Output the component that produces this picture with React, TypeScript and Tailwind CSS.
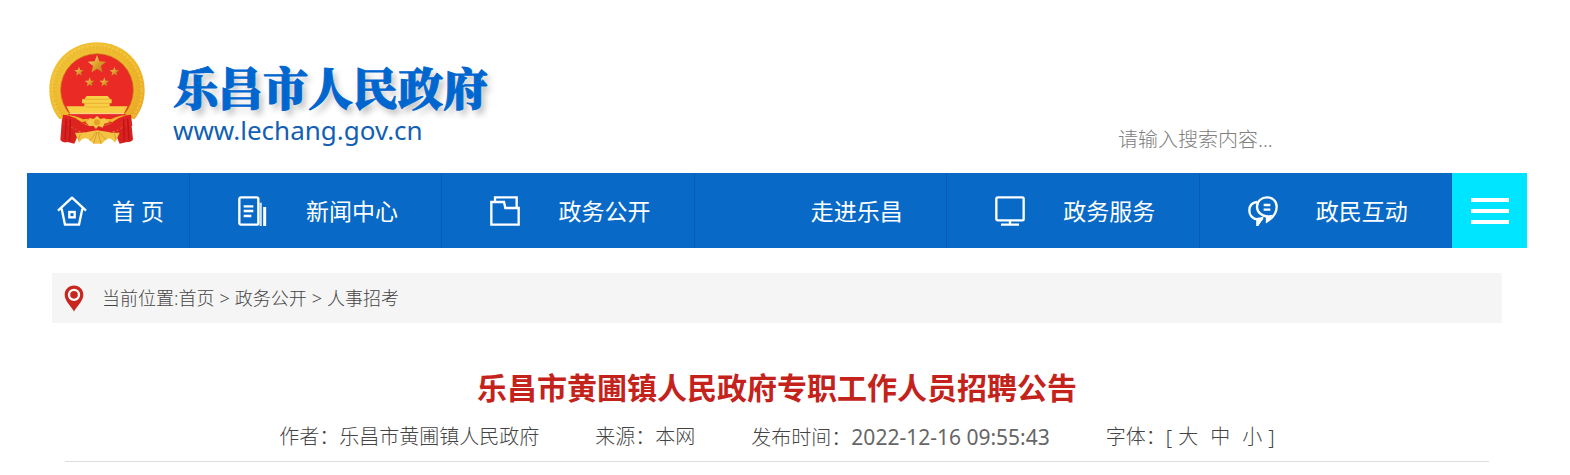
import type { ReactNode } from "react";

const star = (cx: number, cy: number, r: number) =>
  Array.from({ length: 10 }, (_, i) => {
    const a = (Math.PI / 5) * i - Math.PI / 2;
    const q = i % 2 ? r * 0.42 : r;
    return `${(cx + q * Math.cos(a)).toFixed(1)},${(cy + q * Math.sin(a)).toFixed(1)}`;
  }).join(" ");

function Emblem() {
  return (
    <svg viewBox="50 30 300 315" className="h-[105px] w-[100px] shrink-0" role="img" aria-label="国徽">
      <defs>
        <linearGradient id="gold" x1="0" y1="0" x2="1" y2="1">
          <stop offset="0" stopColor="#f0c53c" />
          <stop offset="0.5" stopColor="#efb92c" />
          <stop offset="1" stopColor="#e9a827" />
        </linearGradient>
        <linearGradient id="starGold" x1="0" y1="0" x2="1" y2="1">
          <stop offset="0" stopColor="#fbe08a" />
          <stop offset="0.5" stopColor="#dfa12c" />
          <stop offset="1" stopColor="#b4701a" />
        </linearGradient>
      </defs>
      <path d="M96 252 L90 330 Q98 340 112 336 L132 341 L142 318 L258 318 L268 341 L290 336 Q304 338 308 328 L300 252 Z" fill="#d8201f" />
      <path d="M200 37 C282 37 343 100 343 180 C343 216 331 246 312 268 L286 258 L232 300 L168 300 L114 258 L88 268 C69 246 57 216 57 180 C57 100 118 37 200 37 Z" fill="url(#gold)" />
      <circle cx="200" cy="180" r="126" fill="none" stroke="#d59b22" strokeWidth="12" strokeDasharray="3 7" opacity="0.25" />
      <circle cx="200" cy="180" r="134" fill="none" stroke="#f7d858" strokeWidth="5" strokeDasharray="7 6" opacity="0.5" />
      <circle cx="200" cy="180" r="109" fill="#e92a25" stroke="#c9781e" strokeWidth="2" />
      <polygon points={star(200, 104, 29)} fill="url(#starGold)" />
      <polygon points={star(146, 125, 15)} fill="url(#starGold)" />
      <polygon points={star(252, 125, 15)} fill="url(#starGold)" />
      <polygon points={star(178, 157, 15)} fill="url(#starGold)" />
      <polygon points={star(222, 157, 15)} fill="url(#starGold)" />
      <path d="M169 198 H232 L240 208 H244 V220 H238 V229 H292 L280 251 H120 L108 229 H162 V220 H155 V208 H162 Z" fill="#f8cf45" />
      <path d="M162 208 H238 M163 220 H237" stroke="#e4a52b" strokeWidth="2" />
      <path d="M166 231 H234" stroke="#e4a52b" strokeWidth="2" />
      <path d="M112 252 Q200 256 288 252 L268 276 L236 268 L200 258 L164 268 L132 276 Z" fill="#e92a25" />
      <path d="M118 251 H282" stroke="#fff0d0" strokeWidth="2" />
      <path d="M98 254 Q125 254 146 272 Q168 292 198 287 Q232 292 254 272 Q276 254 302 254 L306 288 Q284 284 266 298 Q240 312 200 305 Q160 312 134 298 Q116 284 94 288 Z" fill="#de2320" />
      <path d="M112 256 Q134 256 158 268 L174 266 L170 274 L154 276 Q134 262 112 256 Z M288 256 Q266 256 242 268 L226 266 L230 274 L246 276 Q266 262 288 256 Z" fill="#efb92c" />
      <path d="M108 266 L104 330 M120 268 L118 334 M292 266 L296 330 M280 268 L282 334" stroke="#b9151a" strokeWidth="4" />
      <path d="M166 277 L178 264 L190 267 L200 258 L210 267 L222 264 L238 277 L222 281 L217 293 L204 288 L197 297 L189 287 L178 289 Z" fill="#f5c743" />
      <circle cx="200" cy="277" r="9" fill="#e3a12a" />
      <path d="M134 308 Q154 310 174 305 L200 301 L230 305 Q248 310 268 308 L254 338 Q238 318 226 330 L214 341 L190 341 L174 328 Q160 318 146 338 Z" fill="#f3c343" />
      <path d="M198 306 L178 332 M200 306 L190 341 M203 306 L212 341 M206 306 L228 330 M150 312 L144 330 M252 312 L258 330" stroke="#cf8b22" strokeWidth="2" />
    </svg>
  );
}

function Icon({ children }: { children?: ReactNode }) {
  return (
    <svg viewBox="0 0 90 90" className="size-[30px] shrink-0" fill="none" stroke="#fff" strokeWidth="7" aria-hidden="true">
      {children}
    </svg>
  );
}

const house = (
  <>
    <path d="M3 44 L45 5 L87 44 M14 38 L24 86 H66 L76 38" strokeLinejoin="round" />
    <rect x="37" y="48" width="16" height="16" />
  </>
);
const news = (
  <>
    <rect x="4" y="4" width="57" height="82" rx="5" />
    <path d="M17 31 H46 M17 45 H46 M17 60 H40" />
    <path d="M68 20 V90" opacity="0.8" />
    <path d="M80 33 V90" strokeWidth="9" />
  </>
);
const folder = (
  <>
    <path d="M4 18 H42 L46 36 H86 V86 H4 Z" />
    <path d="M15 18 V4 H80 V36" />
  </>
);
const monitor = (
  <>
    <rect x="4" y="4" width="82" height="69" rx="4" />
    <path d="M45 73 V86 M18 86 H72" />
  </>
);
const chat = (
  <>
    <path d="M27 18 C10 20 4 32 4 44 C4 58 14 69 29 70 L29 84 L44 66" />
    <path d="M57 4 C40 4 27 16 27 32 C27 48 40 60 57 61 L57 76 Q86 58 86 32 C86 16 74 4 57 4 Z" />
    <path d="M25 66 L47 62 L31 90 H25 Z M52 60 L74 56 L57 80 Z" fill="#fff" stroke="none" />
    <path d="M47 27 H67 M47 41 H67" />
  </>
);

const navItems: { label: string; icon?: ReactNode }[] = [
  { label: "新闻中心", icon: news },
  { label: "政务公开", icon: folder },
  { label: "走进乐昌" },
  { label: "政务服务", icon: monitor },
  { label: "政民互动", icon: chat },
];

export default function App() {
  return (
    <div className="bg-white pr-[43px] pl-[27px] font-['Noto_Sans','Noto_Sans_CJK_SC',sans-serif] text-[#444]">
      <header className="flex items-start justify-between pt-10 pl-5">
        <a href="#" className="flex h-[133px] items-start">
          <Emblem />
          <span className="flex flex-col pt-5 pl-[26px]">
            <span className="font-['Noto_Serif_CJK_SC','Noto_Sans_CJK_SC',serif] text-[45px] leading-[54px] font-black text-[#0066cf] [-webkit-text-stroke:1px_#0066cf] [text-shadow:0_0_2px_#fff,4px_5px_6px_rgba(0,0,0,0.25)]">
              乐昌市人民政府
            </span>
            <span className="text-[26px] leading-8 text-[#125fb3]">www.lechang.gov.cn</span>
          </span>
        </a>
        <form className="w-[409px] pt-[83px]">
          <input
            type="text"
            aria-label="搜索"
            placeholder="请输入搜索内容..."
            className="h-8 w-64 bg-transparent text-xl font-light outline-none placeholder:text-[#808080]"
          />
        </form>
      </header>

      <nav className="flex h-[75px] bg-[#086ac6] text-[23px] text-white">
        <a href="#" className="flex w-[163px] items-center gap-[25px] border-r border-[#055bb4] pl-[30px] whitespace-pre">
          <Icon>{house}</Icon>
          <span className="pt-0.5">首 页</span>
        </a>
        {navItems.map((item) => (
          <a key={item.label} href="#" className="flex flex-1 items-center gap-[38px] border-r border-[#055bb4] pl-12 whitespace-nowrap">
            <Icon>{item.icon}</Icon>
            <span className="pt-0.5">{item.label}</span>
          </a>
        ))}
        <button type="button" aria-label="更多" className="flex w-[75px] flex-col items-center justify-center gap-[7px] bg-[#00e5ff]">
          <span className="h-1 w-[38px] bg-white" />
          <span className="h-1 w-[38px] bg-white" />
          <span className="h-1 w-[38px] bg-white" />
        </button>
      </nav>

      <main className="px-[25px] pt-[25px]">
        <div className="flex h-[50px] items-center bg-[#f5f5f5] pl-3 text-lg font-light">
          <svg viewBox="0 0 60 80" className="h-[27px] w-5" aria-hidden="true">
            <path d="M30 1 C14 1 2 13 2 29 C2 47 20 62 30 79 C40 62 58 47 58 29 C58 13 46 1 30 1 Z" fill="#c8261e" />
            <circle cx="30" cy="29" r="15" fill="none" stroke="#fff" strokeWidth="7" />
          </svg>
          <div className="flex items-center gap-[5px] pl-[18px]">
            <span>当前位置:<a href="#">首页</a></span>
            <span>&gt;</span>
            <a href="#">政务公开</a>
            <span>&gt;</span>
            <a href="#">人事招考</a>
          </div>
        </div>

        <article className="px-[13px] pt-[42px]">
          <h1 className="text-center text-[30px] leading-[46px] font-bold text-[#c4231c]">
            乐昌市黄圃镇人民政府专职工作人员招聘公告
          </h1>
          <div className="flex h-[51px] justify-center gap-14 border-b border-[#ddd] text-xl leading-[52px] font-light">
            <span>作者：乐昌市黄圃镇人民政府</span>
            <span>来源：本网</span>
            <span>发布时间：<time className="text-[21px] font-normal text-[#666]">2022-12-16 09:55:43</time></span>
            <span className="flex">
              字体：[
              <span className="flex gap-3 px-[6px]">
                <button type="button">大</button>
                <button type="button">中</button>
                <button type="button">小</button>
              </span>
              ]
            </span>
          </div>
        </article>
      </main>
    </div>
  );
}
